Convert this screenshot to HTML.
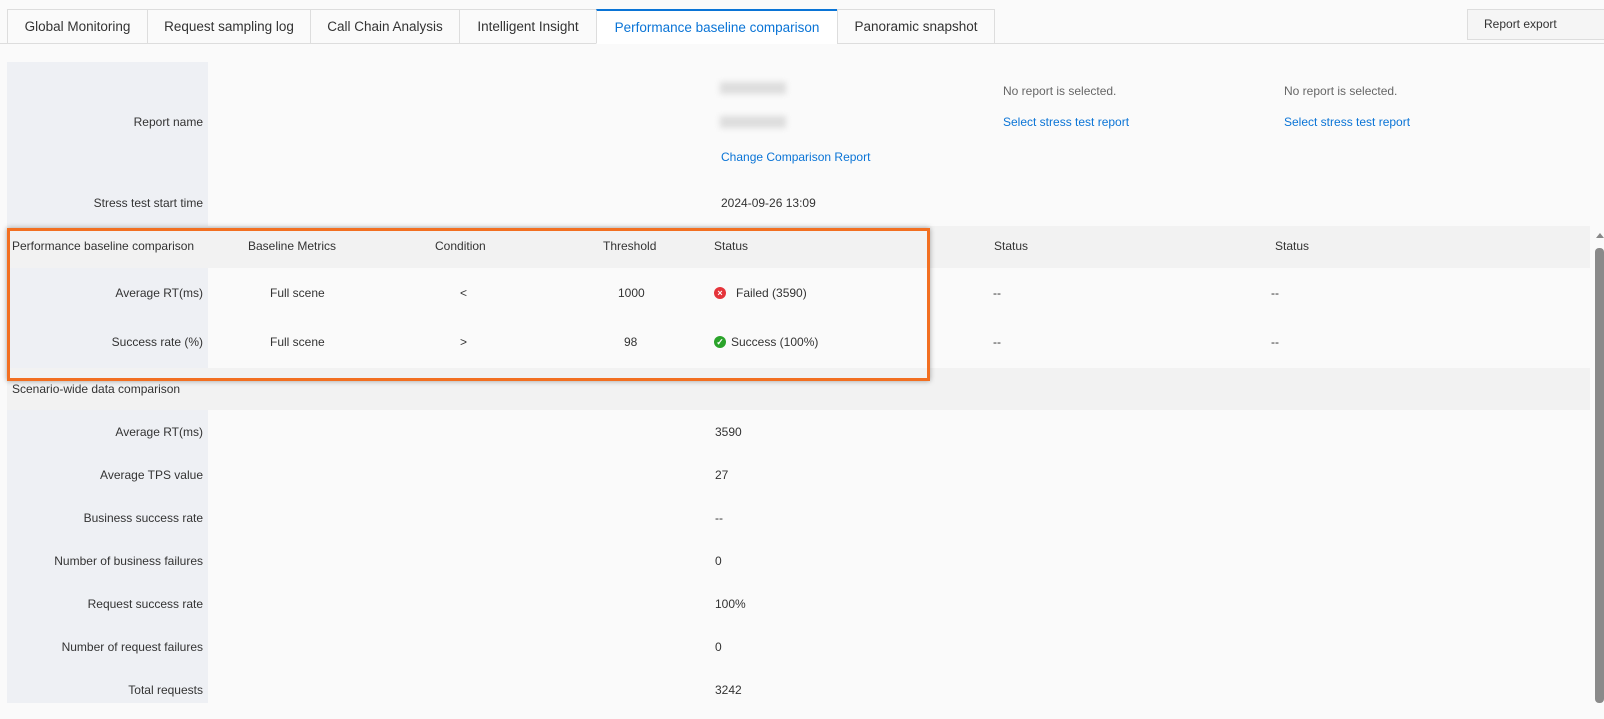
<!DOCTYPE html>
<html><head><meta charset="utf-8"><style>
*{box-sizing:border-box;margin:0;padding:0}
body{width:1604px;height:719px;overflow:hidden;background:#fafafa;font-family:"Liberation Sans",Arial,sans-serif;font-size:12px;color:#333;position:relative}
.a{position:absolute;white-space:nowrap}
.tab{position:absolute;top:9px;height:35px;border:1px solid #ddd;border-right:none;background:#fafafa;font-size:13.5px;color:#333;text-align:center;line-height:33px}
.lab{position:absolute;left:7px;width:201px;background:#eef0f4}
.r{position:absolute;width:196px;left:7px;text-align:right}
.blue{color:#0a74d6}
.gray{color:#666}
.hdr{position:absolute;left:7px;width:1583px;background:#f2f2f2}
</style></head><body>
<div class="a" style="left:0;top:43px;width:1604px;border-top:1px solid #ddd"></div>
<div class="tab" style="left:7px;width:140px">Global Monitoring</div>
<div class="tab" style="left:147px;width:163px">Request sampling log</div>
<div class="tab" style="left:310px;width:149px">Call Chain Analysis</div>
<div class="tab" style="left:459px;width:137px">Intelligent Insight</div>
<div class="tab" style="left:596px;width:241px;color:#0a74d6;border-top:2px solid #0a74d6;background:#fff;border-bottom-color:#fff">Performance baseline comparison</div>
<div class="tab" style="left:837px;width:158px;border-right:1px solid #ddd">Panoramic snapshot</div>
<div class="a" style="left:1467px;top:9px;width:140px;height:31px;border:1px solid #ddd;background:#f5f5f5;line-height:29px;padding-left:16px;font-size:12px">Report export</div>

<div class="lab" style="top:62px;height:164px"></div>
<div class="r" style="top:115px">Report name</div>
<div class="a" style="left:720px;top:82px;width:66px;height:12px;background:#ddd;filter:blur(3px)"></div>
<div class="a" style="left:720px;top:116px;width:66px;height:12px;background:#ddd;filter:blur(3px)"></div>
<div class="a blue" style="left:721px;top:150px">Change Comparison Report</div>
<div class="a gray" style="left:1003px;top:84px">No report is selected.</div>
<div class="a blue" style="left:1003px;top:115px">Select stress test report</div>
<div class="a gray" style="left:1284px;top:84px">No report is selected.</div>
<div class="a blue" style="left:1284px;top:115px">Select stress test report</div>
<div class="r" style="top:196px">Stress test start time</div>
<div class="a" style="left:721px;top:196px">2024-09-26 13:09</div>

<div class="hdr" style="top:226px;height:42px"></div>
<div class="a" style="left:12px;top:239px">Performance baseline comparison</div>
<div class="a" style="left:248px;top:239px">Baseline Metrics</div>
<div class="a" style="left:435px;top:239px">Condition</div>
<div class="a" style="left:603px;top:239px">Threshold</div>
<div class="a" style="left:714px;top:239px">Status</div>
<div class="a" style="left:994px;top:239px">Status</div>
<div class="a" style="left:1275px;top:239px">Status</div>

<div class="lab" style="top:268px;height:100px"></div>
<div class="r" style="top:286px">Average RT(ms)</div>
<div class="a" style="left:270px;top:286px">Full scene</div>
<div class="a" style="left:460px;top:286px">&lt;</div>
<div class="a" style="left:618px;top:286px">1000</div>
<div class="a" style="left:714px;top:287px;width:12px;height:12px;border-radius:50%;background:#e5343a;color:#fff;font-size:9px;line-height:12px;text-align:center;font-weight:bold">×</div>
<div class="a" style="left:736px;top:286px">Failed (3590)</div>
<div class="a" style="left:993px;top:286px">--</div>
<div class="a" style="left:1271px;top:286px">--</div>
<div class="r" style="top:335px">Success rate (%)</div>
<div class="a" style="left:270px;top:335px">Full scene</div>
<div class="a" style="left:460px;top:335px">&gt;</div>
<div class="a" style="left:624px;top:335px">98</div>
<div class="a" style="left:714px;top:336px;width:12px;height:12px;border-radius:50%;background:#2aa32a;color:#fff;font-size:9px;line-height:12px;text-align:center;font-weight:bold">✓</div>
<div class="a" style="left:731px;top:335px">Success (100%)</div>
<div class="a" style="left:993px;top:335px">--</div>
<div class="a" style="left:1271px;top:335px">--</div>

<div class="hdr" style="top:368px;height:42px;background:#f2f2f2"></div>
<div class="a" style="left:12px;top:382px">Scenario-wide data comparison</div>
<div class="lab" style="top:410px;height:293px"></div>
<div class="r" style="top:425px">Average RT(ms)</div><div class="a" style="left:715px;top:425px">3590</div>
<div class="r" style="top:468px">Average TPS value</div><div class="a" style="left:715px;top:468px">27</div>
<div class="r" style="top:511px">Business success rate</div><div class="a" style="left:715px;top:511px">--</div>
<div class="r" style="top:554px">Number of business failures</div><div class="a" style="left:715px;top:554px">0</div>
<div class="r" style="top:597px">Request success rate</div><div class="a" style="left:715px;top:597px">100%</div>
<div class="r" style="top:640px">Number of request failures</div><div class="a" style="left:715px;top:640px">0</div>
<div class="r" style="top:683px">Total requests</div><div class="a" style="left:715px;top:683px">3242</div>

<div class="a" style="left:7px;top:228px;width:923px;height:153px;border:3px solid #f26f21;box-shadow:0 0 5px rgba(0,0,0,.35);z-index:5"></div>

<div class="a" style="left:1596px;top:233px;width:0;height:0;border-left:4px solid transparent;border-right:4px solid transparent;border-bottom:5px solid #888"></div>
<div class="a" style="left:1595px;top:248px;width:9px;height:455px;background:#8a8a8a;border-radius:4px"></div>
</body></html>
